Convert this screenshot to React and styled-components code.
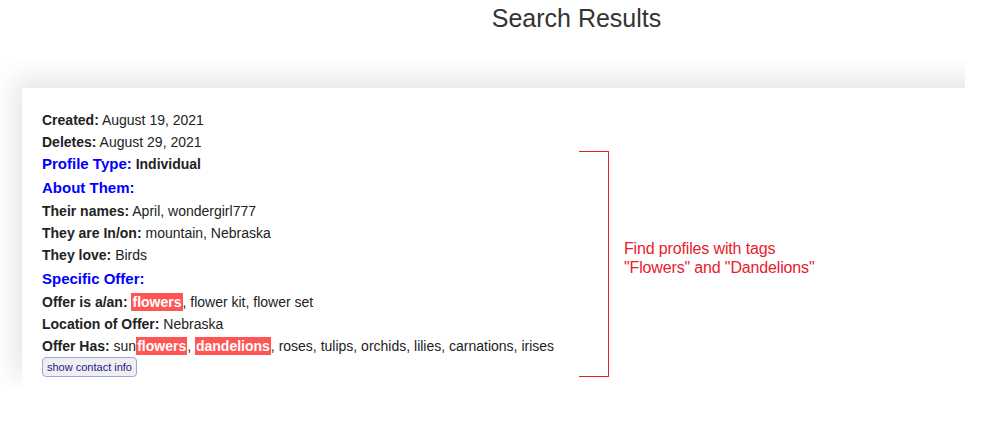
import React from "react";
import styled, { createGlobalStyle } from "styled-components";

const Global = createGlobalStyle`
  html, body { margin: 0; padding: 0; background: #fff; }
  body { font-family: "Liberation Sans", Arial, sans-serif; color: #222; }
`;

const Page = styled.div`
  width: 1003px;
  height: 427px;
  overflow: hidden;
  background: #fff;
`;

const Header = styled.header`
  display: flex;
  justify-content: center;
  padding-left: 150px;
  padding-top: 4px;
  height: 60px;
  box-sizing: border-box;
`;

const Title = styled.h1`
  margin: 0;
  font-size: 25px;
  font-weight: normal;
  color: #333;
  line-height: normal;
`;

const ShotFrame = styled.div`
  width: 965px;
  height: 327px;
  overflow: hidden;
  padding: 28px 0 0 22px;
  box-sizing: border-box;
`;

const Card = styled.div`
  width: 1000px;
  height: 299px;
  box-sizing: border-box;
  background: #fff;
  box-shadow: -8px -10px 26px rgba(0, 0, 0, 0.1);
  padding: 21px 20px 10px;
  display: flex;
  align-items: flex-start;
`;

const Details = styled.div`
  flex: 0 0 537px;
  display: flex;
  flex-direction: column;
  font-size: 14px;
`;

const Row = styled.div`
  line-height: 22px;
  height: 22px;
  white-space: nowrap;
  color: #222;
`;

const HeadRow = styled.div`
  line-height: 25px;
  height: 25px;
  font-size: 15px;
  font-weight: bold;
  color: #0000ff;
`;

const Label = styled.b`
  font-weight: bold;
  color: #222;
`;

const BlueLabel = styled.span`
  font-size: 15px;
  font-weight: bold;
  color: #0000ff;
`;

const Tag = styled.span`
  background: #ff5555;
  color: #fff;
  font-weight: bold;
  padding: 1px 1px;
`;

const ButtonRow = styled.div`
  display: flex;
  height: 20px;
`;

const ContactButton = styled.button`
  font-family: "Liberation Sans", Arial, sans-serif;
  font-size: 11px;
  line-height: 16px;
  padding: 1px 4px;
  border: 1px solid #a3a3df;
  border-radius: 4px;
  background: #efeff2;
  color: #1a1a8c;
  cursor: pointer;
`;

const Bracket = styled.div`
  flex: 0 0 auto;
  width: 29px;
  height: 224px;
  margin-top: 42px;
  border: 1px solid #e3222c;
  border-left: none;
`;

const Note = styled.div`
  margin-top: 130px;
  margin-left: 15px;
  font-size: 16px;
  line-height: 19px;
  letter-spacing: -0.15px;
  color: #e8202c;
  white-space: nowrap;
`;

export default function App() {
  return (
    <Page>
      <Global />
      <Header>
        <Title>Search Results</Title>
      </Header>
      <ShotFrame>
        <Card>
          <Details>
            <Row><Label>Created:</Label> August 19, 2021</Row>
            <Row><Label>Deletes:</Label> August 29, 2021</Row>
            <Row><BlueLabel>Profile Type:</BlueLabel> <Label>Individual</Label></Row>
            <HeadRow>About Them:</HeadRow>
            <Row><Label>Their names:</Label> April, wondergirl777</Row>
            <Row><Label>They are In/on:</Label> mountain, Nebraska</Row>
            <Row><Label>They love:</Label> Birds</Row>
            <HeadRow>Specific Offer:</HeadRow>
            <Row><Label>Offer is a/an:</Label> <Tag>flowers</Tag>, flower kit, flower set</Row>
            <Row><Label>Location of Offer:</Label> Nebraska</Row>
            <Row><Label>Offer Has:</Label> sun<Tag>flowers</Tag>, <Tag>dandelions</Tag>, roses, tulips, orchids, lilies, carnations, irises</Row>
            <ButtonRow>
              <ContactButton>show contact info</ContactButton>
            </ButtonRow>
          </Details>
          <Bracket />
          <Note>
            Find profiles with tags
            <br />
            "Flowers" and "Dandelions"
          </Note>
        </Card>
      </ShotFrame>
    </Page>
  );
}
